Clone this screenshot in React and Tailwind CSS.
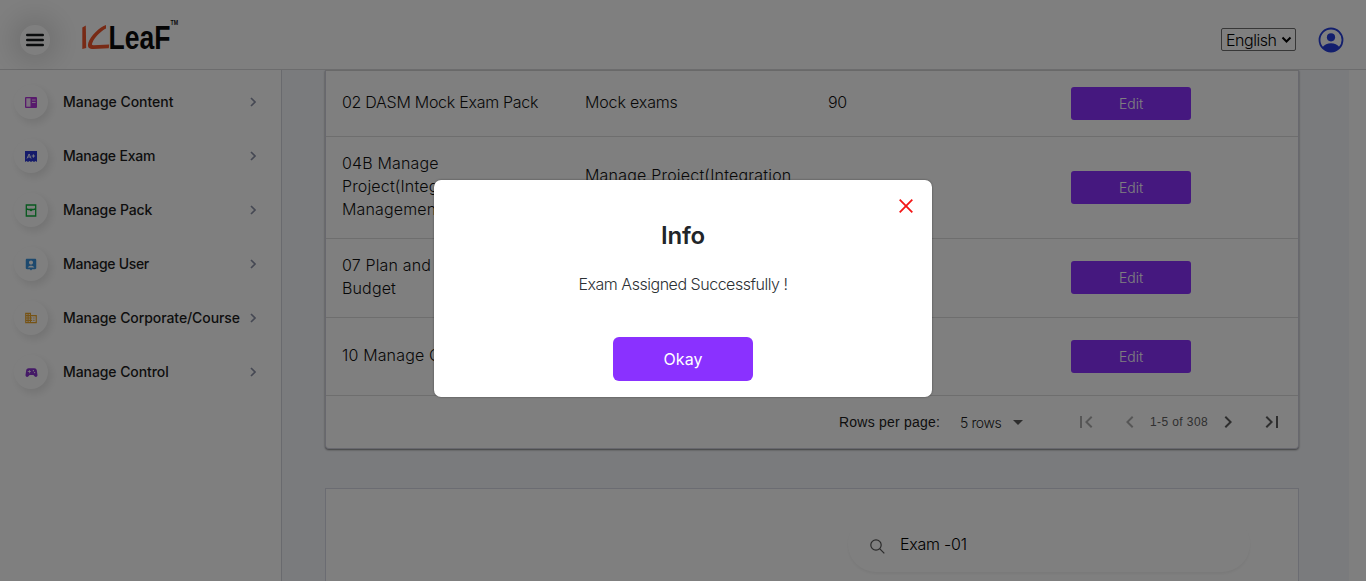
import React from "react";
import { RiAccountPinBoxFill } from "react-icons/ri";
import { MdOutlineBusiness, MdSportsEsports, MdFirstPage, MdLastPage, MdChevronLeft, MdChevronRight, MdArrowDropDown } from "react-icons/md";

function ContentIcon() {
  return (
    <svg width="12" height="11" viewBox="0 0 12 11">
      <rect width="12" height="11" rx="1" fill="#b034d8" />
      <rect x="1.3" y="1.3" width="4.2" height="8.4" fill="#f6e3fb" />
      <path d="M7 3h3.600M7 5.500h3.600" stroke="#f0d0f8" strokeWidth="1" />
    </svg>
  );
}

function ExamIcon() {
  return (
    <svg width="12" height="11" viewBox="0 0 12 11">
      <path d="M0 0h12v11l-1.5-1L9 11l-1.5-1L6 11l-1.500-1L3 11l-1.500-1L0 11z" fill="#2a37d6" />
      <path d="M2 7.500 4.100 3l2 4.500M2.900 6h2.400M6.700 5h3.400M8.400 3.300v3.400" stroke="#fff" strokeWidth="0.9" fill="none" />
    </svg>
  );
}

function PackIcon() {
  return (
    <svg width="12" height="13" viewBox="0 0 12 13" fill="none" stroke="#10b23e" strokeWidth="1.300">
      <path d="M1.300 1h9.400v11H1.300zM1.300 4.500l2 1h5.400l2-1" />
      <circle cx="6" cy="6" r="1.300" fill="#10b23e" stroke="none" />
    </svg>
  );
}

const menu = [
  { label: "Manage Content", icon: <ContentIcon />, track: "tracking-[-0.04px]" },
  { label: "Manage Exam", icon: <ExamIcon />, track: "tracking-[-0.18px]" },
  { label: "Manage Pack", icon: <PackIcon />, track: "tracking-[-0.12px]" },
  { label: "Manage User", icon: <RiAccountPinBoxFill size={14} color="#3b93dc" />, track: "tracking-[-0.3px]" },
  { label: "Manage Corporate/Course", icon: <MdOutlineBusiness size={14} color="#eda62a" />, track: "tracking-[-0.08px]" },
  { label: "Manage Control", icon: <MdSportsEsports size={15} color="#8b35cf" />, track: "tracking-[-0.08px]" },
];

const rows = [
  { name: "02 DASM Mock Exam Pack", type: "Mock exams", count: "90", h: "h-[66px]", track: "tracking-[-0.28px]", typeTrack: "tracking-[-0.15px]", wrap: "whitespace-nowrap", btn: "" },
  { name: "04B Manage Project(Integration Management)", type: "Manage Project(Integration Management)", count: "60", h: "h-[102px]", track: "tracking-[0.15px]", typeTrack: "tracking-[0.2px]", wrap: "", btn: "" },
  { name: "07 Plan and Budget", type: "Plan and Budget", count: "60", h: "h-[79px]", track: "tracking-[0.15px]", typeTrack: "", wrap: "", btn: "pb-px" },
  { name: "10 Manage Quality", type: "Manage Quality", count: "60", h: "h-[78px]", track: "tracking-[0.15px]", typeTrack: "", wrap: "whitespace-nowrap", btn: "" },
];

function Logo() {
  return (
    <svg width="100" height="36" viewBox="0 0 100 36" className="ml-[29px] -mt-2">
      <g fill="#f0552b">
        <path d="M3.300 9.500 6.800 7.500 7.200 30 3.300 31z" />
        <path d="M27 7c-6 1.500-15.500 11-17.600 17.500C8 29.500 10 31 14.500 31L29.800 30.200 30.200 26.500 14.500 27.300c-2 0-1.800-1-1-2.800C15.500 19.500 22 13 27 10.600z" />
      </g>
      <text x="29.5" y="30.700" textLength="62" lengthAdjust="spacingAndGlyphs" fontFamily="Liberation Sans, sans-serif" fontWeight="700" fontSize="33" fill="#0b0b0b">LeaF</text>
      <text x="91.500" y="7.200" textLength="7.500" lengthAdjust="spacingAndGlyphs" fontFamily="Liberation Sans, sans-serif" fontWeight="700" fontSize="7" fill="#111">TM</text>
    </svg>
  );
}

function Header() {
  return (
    <header className="flex h-[70px] shrink-0 items-center border-b border-[#d8d8da] bg-white pt-[10px]">
      <button className="ml-5 flex size-[30px] items-center justify-center rounded-full bg-white shadow-[0_0_28px_8px_rgba(0,0,0,0.14)]">
        <svg width="18" height="14" viewBox="0 0 18 14" stroke="#14181b" strokeWidth="2.400" strokeLinecap="round">
          <path d="M1.200 2h15.600M1.200 7h15.600M1.200 12h15.600" />
        </svg>
      </button>
      <Logo />
      <div className="ml-auto flex h-[23px] w-[75px] items-center justify-between rounded-[2px] border border-[#6f6f6f] pl-1 pr-[3px] text-[16px] font-light text-black">
        <span className="tracking-[-0.45px]">English</span>
        <svg width="11" height="8" viewBox="0 0 11 8" fill="none" stroke="#000" strokeWidth="2"><path d="m1.500 1.500 4 4 4-4" /></svg>
      </div>
      <svg className="ml-[22px] mr-[22px]" width="26" height="26" viewBox="0 0 26 26">
        <circle cx="13" cy="13" r="11.500" fill="none" stroke="#273fdb" strokeWidth="1.800" />
        <circle cx="13" cy="10.300" r="4.100" fill="#273fdb" />
        <path d="M4.500 20.200C6.500 17.500 9.500 16.300 13 16.300s6.500 1.200 8.500 3.900c-2 3-5 4.600-8.500 4.600s-6.500-1.600-8.500-4.600z" fill="#273fdb" />
      </svg>
    </header>
  );
}

function Sidebar() {
  return (
    <nav className="flex w-[282px] shrink-0 flex-col gap-5 border-r border-[#d3d5dc] bg-white pt-[15px]">
      {menu.map((m) => (
        <a key={m.label} className="flex h-[34px] items-center pl-[14px]">
          <span className="flex size-[34px] items-center justify-center rounded-full bg-white shadow-[3px_4px_9px_rgba(0,0,0,0.1)]">{m.icon}</span>
          <span className={"ml-[15px] w-[181px] whitespace-nowrap pb-[2px] text-[14px] font-medium text-[#1c1c1c] " + m.track}>{m.label}</span>
          <svg className="ml-[5px]" width="8" height="10" viewBox="0 0 8 10" fill="none" stroke="#8a90a6" strokeWidth="1.700"><path d="m2 1 4 4-4 4" /></svg>
        </a>
      ))}
    </nav>
  );
}

function ExamTable() {
  return (
    <section className="w-[974px] rounded-b border border-t-[#d2d2d2] border-[#d0d0dc] bg-white shadow-[0_1px_2px_rgba(0,0,0,0.5)]">
      {rows.map((r) => (
        <div key={r.name} className={"grid grid-cols-4 items-center border-b border-[#dcdcdc] text-[16px] leading-[23px] font-light text-[#101010] " + r.h}>
          <div className={"pr-24 pb-[2px] pl-4 " + r.track + " " + r.wrap}>{r.name}</div>
          <div className={"px-4 pb-[2px] " + r.typeTrack}>{r.type}</div>
          <div className="px-4 pb-[2px] tracking-[-0.3px]">{r.count}</div>
          <div className={"px-4 " + r.btn}>
            <button className="flex h-[33px] w-[120px] items-center justify-center rounded-[3px] bg-[#8a31ff] text-[14px] font-light text-white">Edit</button>
          </div>
        </div>
      ))}
      <div className="flex h-[52px] items-center font-['Liberation_Sans',sans-serif] text-[14px] text-[#1c1c1c]">
        <span className="ml-[513px] w-[101px] tracking-[0.22px] whitespace-nowrap">Rows per page:</span>
        <span className="ml-[20px] w-[42px] tracking-[-0.4px] whitespace-nowrap font-['Inter',sans-serif] font-light">5 rows</span>
        <MdArrowDropDown size={24} color="#5c5c5c" className="ml-[4px]" />
        <MdFirstPage size={24} color="#adadad" className="ml-[44px]" />
        <MdChevronLeft size={24} color="#adadad" className="ml-[20px]" />
        <span className="ml-[8px] w-[58px] whitespace-nowrap text-[12px] tracking-[0.4px] text-[#606060]">1-5 of 308</span>
        <MdChevronRight size={24} color="#5c5c5c" className="ml-[8px]" />
        <MdLastPage size={24} color="#5c5c5c" className="ml-[20px]" />
      </div>
    </section>
  );
}

function SearchCard() {
  return (
    <section className="mt-[39px] h-[200px] w-[974px] border border-[#d6d8e4] bg-white">
      <div className="ml-[522px] mt-[27px] flex h-[56px] w-[402px] items-center rounded-[28px] bg-white pl-[22px] shadow-[0_2px_3px_rgba(0,0,0,0.05)]">
        <svg className="mt-[4px]" width="15" height="15" viewBox="0 0 15 15" fill="none" stroke="#555" strokeWidth="1.200"><circle cx="6" cy="6" r="5.200" /><path d="m9.800 9.800 4.500 4.500" /></svg>
        <span className="ml-[15px] text-[16px] tracking-[-0.25px] font-light text-black">Exam -01</span>
      </div>
    </section>
  );
}

function Modal() {
  return (
    <div className="absolute inset-0 flex justify-center bg-black/50">
      <div className="relative mt-[180px] flex h-[217px] w-[498px] flex-col items-center rounded-[7px] bg-white shadow-[0_0_2px_rgba(0,0,0,0.5)]">
        <button className="absolute right-[19px] top-[19px]">
          <svg width="14" height="14" viewBox="0 0 14 14" stroke="#f31515" strokeWidth="1.800"><path d="m.7.7 12.600 12.600M13.300.7.7 13.300" /></svg>
        </button>
        <h2 className="mt-[41px] text-[24px] leading-[30px] font-semibold tracking-[-0.2px] text-[#212529]">Info</h2>
        <p className="mt-[21px] text-[16px] leading-[24px] tracking-[-0.47px] font-light text-[#2c3034]">Exam Assigned Successfully !</p>
        <button className="mt-[41px] flex h-[44px] w-[140px] items-center justify-center rounded-[6px] bg-[#8a31ff] pb-px text-[16px] text-white">Okay</button>
      </div>
    </div>
  );
}

export default function App() {
  return (
    <div className="relative flex h-[581px] w-[1366px] flex-col overflow-hidden bg-white font-['Inter',sans-serif]">
      <Header />
      <div className="flex min-h-0 flex-1">
        <Sidebar />
        <main className="w-[1067px] overflow-hidden bg-[#f5f7fb] pl-[43px]">
          <ExamTable />
          <SearchCard />
        </main>
      </div>
      <Modal />
    </div>
  );
}
